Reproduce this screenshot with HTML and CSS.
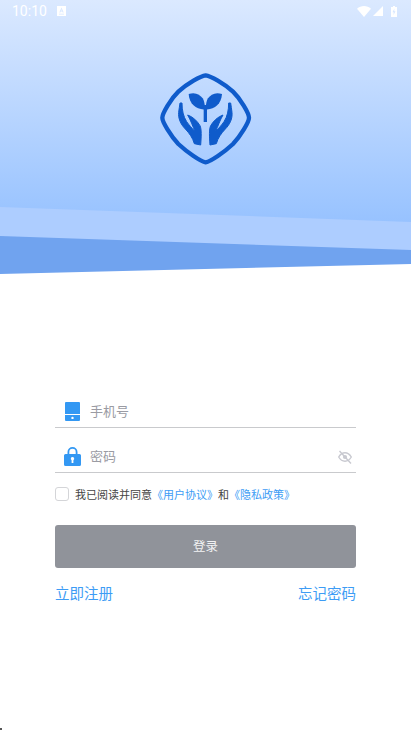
FILE: index.html
```html
<!DOCTYPE html>
<html lang="zh">
<head>
<meta charset="utf-8">
<title>登录</title>
<link rel="stylesheet" href="styles.css">
</head>
<body>
<div class="page">
  <header class="hero">
    <svg class="hero-bg" viewBox="0 0 411 274" preserveAspectRatio="none">
      <defs>
        <linearGradient id="sky" x1="0" y1="0" x2="0" y2="1">
          <stop offset="0" stop-color="#dbe9ff"/>
          <stop offset="1" stop-color="#97c2ff"/>
        </linearGradient>
      </defs>
      <rect width="411" height="223" fill="url(#sky)"/>
      <polygon points="0,207 411,222 411,251 0,237" fill="#adcdff"/>
      <polygon points="0,236 411,250 411,264 0,274" fill="#70a3ef"/>
    </svg>
    <div class="status">
      <span class="time">10:10</span>
      <svg class="st-a" viewBox="0 0 9 10"><path fill="#fff" fill-rule="evenodd" d="M0 0h9v10H0zM4.500 1.500 2.300 6.500h1l.4-1h1.600l.4 1h1zM4 4.600l.5-1.400.5 1.400zM2 7.800v.7h5v-.7z"/></svg>
      <span class="st-gap"></span>
      <svg class="st-wifi" viewBox="0 0 14 11"><path fill="#fff" d="M0 2.800C3.800-.9 10.200-.9 14 2.800L7 11z"/></svg>
      <svg class="st-cell" viewBox="0 0 10 10"><path fill="#fff" d="M10 0v10H0z"/></svg>
      <svg class="st-batt" viewBox="0 0 6 11"><path fill="#fff" fill-rule="evenodd" d="M2 0h2v1h2v10H0V1h2zM3.400 2.500 1.500 6.300h1.200L2.500 9l2-3.700H3.200z"/></svg>
    </div>
    <svg class="logo" viewBox="0 0 330 315">
      <path fill="none" stroke="#0f5bcb" stroke-width="13" stroke-linejoin="round" d="M167 31C152 33 112 55 85 80C62 102 37 145 37 158C37 171 62 212 85 237C112 262 152 290 167 292C182 290 222 262 249 237C272 212 297 171 297 158C297 145 272 102 249 80C222 55 182 33 167 31Z"/>
      <path fill="#0f5bcb" d="M116 87C135 80 150 88 158 100C162 106 165 118 165 133C140 135 118 118 116 87Z"/>
      <path fill="#0f5bcb" d="M216 87C197 80 182 88 174 100C170 106 167 118 167 133C192 135 214 118 216 87Z"/>
      <path fill="#0f5bcb" d="M161 120H171V171H161Z"/>
      <path fill="#0f5bcb" stroke="#0f5bcb" stroke-width="3" stroke-linejoin="round" d="M90 114L96 114C96 135 100 155 110 170C117 180 125 189 135 199C128 184 122 165 113 150C128 155 142 168 150 182C155 192 154 215 152 240L133 236C128 218 118 205 106 192C92 178 84 160 86 142C87 132 89 122 90 114Z"/>
      <path fill="#0f5bcb" stroke="#0f5bcb" stroke-width="3" stroke-linejoin="round" transform="matrix(-1 0 0 1 332 0)" d="M90 114L96 114C96 135 100 155 110 170C117 180 125 189 135 199C128 184 122 165 113 150C128 155 142 168 150 182C155 192 154 215 152 240L133 236C128 218 118 205 106 192C92 178 84 160 86 142C87 132 89 122 90 114Z"/>
    </svg>
  </header>
  <main class="form">
    <label class="field">
      <svg class="icon-phone" viewBox="0 0 15 19"><path fill="#3398f3" fill-rule="evenodd" d="M1 0h13a1 1 0 0 1 1 1v11H0V1a1 1 0 0 1 1-1zM0 13h15v5a1 1 0 0 1-1 1H1a1 1 0 0 1-1-1zM7.500 14.700a1.200 1.200 0 1 0 0 2.400 1.200 1.200 0 0 0 0-2.400z"/></svg>
      <span class="placeholder">手机号</span>
    </label>
    <label class="field">
      <svg class="icon-lock" viewBox="0 0 17 20"><path fill="#3398f3" fill-rule="evenodd" d="M3.500 8V6a5 5 0 0 1 10 0v2h2a1.500 1.500 0 0 1 1.500 1.500V18.500a1.500 1.500 0 0 1-1.500 1.500h-14A1.500 1.500 0 0 1 0 18.500V9.500A1.500 1.500 0 0 1 1.500 8zM5.300 8h6.400V6a3.200 3.200 0 0 0-6.400 0zM8.500 11a1.800 1.800 0 0 0-.9 3.300V17h1.800v-2.700A1.800 1.800 0 0 0 8.500 11z"/></svg>
      <span class="placeholder">密码</span>
      <svg class="eye" viewBox="0 0 14 14"><g fill="none" stroke="#c8c9d0" stroke-width="1.400"><path d="M.7 7C2.500 4 4.700 2.800 7 2.800S11.500 4 13.300 7C11.500 10 9.300 11.200 7 11.200S2.500 10 .7 7Z"/><path d="M1.500 1L13 13.500"/></g><circle cx="7" cy="7" r="2.100" fill="#c8c9d0"/></svg>
    </label>
    <div class="agree">
      <span class="check"></span>
      <span class="agree-text">我已阅读并同意<a class="link">《用户协议》</a>和<a class="link">《隐私政策》</a></span>
    </div>
    <button class="submit" type="button">登录</button>
    <div class="extras">
      <a class="link">立即注册</a>
      <a class="link">忘记密码</a>
    </div>
  </main>
  <span class="speck"></span>
</div>
</body>
</html>
```
FILE: styles.css
```css
* { box-sizing: border-box; }
html, body { margin: 0; padding: 0; }
body {
  background: #fff;
  font-family: "Noto Sans CJK SC", "Liberation Sans", sans-serif;
}
.page { position: relative; width: 411px; height: 730px; overflow: hidden; }
.speck { position: absolute; left: 0; bottom: 0; width: 2px; height: 2px; background: #555; }
.hero { position: relative; height: 274px; }
.hero-bg { position: absolute; inset: 0; width: 411px; height: 274px; display: block; }
.status {
  position: relative;
  display: flex;
  align-items: center;
  height: 22px;
  padding: 0 14px 0 12px;
  color: #fff;
}
.time { font-family: Roboto, sans-serif; font-size: 14px; line-height: 22px; width: 45px; }
.st-a { width: 9px; height: 10px; }
.st-gap { flex: 1; }
.st-wifi { width: 14px; height: 11px; margin-right: 2px; }
.st-cell { width: 10px; height: 10px; margin-right: 8px; }
.st-batt { width: 6px; height: 11px; }
.logo { position: relative; display: block; width: 110px; height: 105px; margin: 43px 0 0 150px; }
.form { padding: 109px 55px 0; }
.field {
  display: flex;
  align-items: flex-end;
  height: 45px;
  border-bottom: 1px solid #c9cacd;
  padding: 0 4px 6px 9px;
}
.icon-phone { width: 15px; height: 19px; flex: none; margin: 0 10px 0 1px; }
.icon-lock { width: 17px; height: 20px; flex: none; margin-right: 9px; }
.placeholder { font-size: 13px; line-height: 20px; color: #9a9ba3; flex: 1; }
.eye { width: 14px; height: 14px; margin-bottom: 2px; }
.agree { display: flex; align-items: center; height: 14px; margin-top: 14px; }
.check {
  width: 14px; height: 14px;
  border: 1px solid #d4d5d8;
  border-radius: 3px;
  flex: none;
}
.agree-text { margin-left: 6px; font-size: 11px; line-height: 14px; color: #444; white-space: pre; }
.link { color: #3d9cf5; }
.submit {
  display: block;
  width: 301px;
  height: 43px;
  margin-top: 24px;
  padding: 0 0 2px;
  border: 0;
  border-radius: 3px;
  background: #90939a;
  color: #f2f2f3;
  font: 12.500px "Noto Sans CJK SC", sans-serif;
}
.extras {
  display: flex;
  justify-content: space-between;
  margin-top: 14px;
  font-size: 14.500px;
  line-height: 22px;
}
```
